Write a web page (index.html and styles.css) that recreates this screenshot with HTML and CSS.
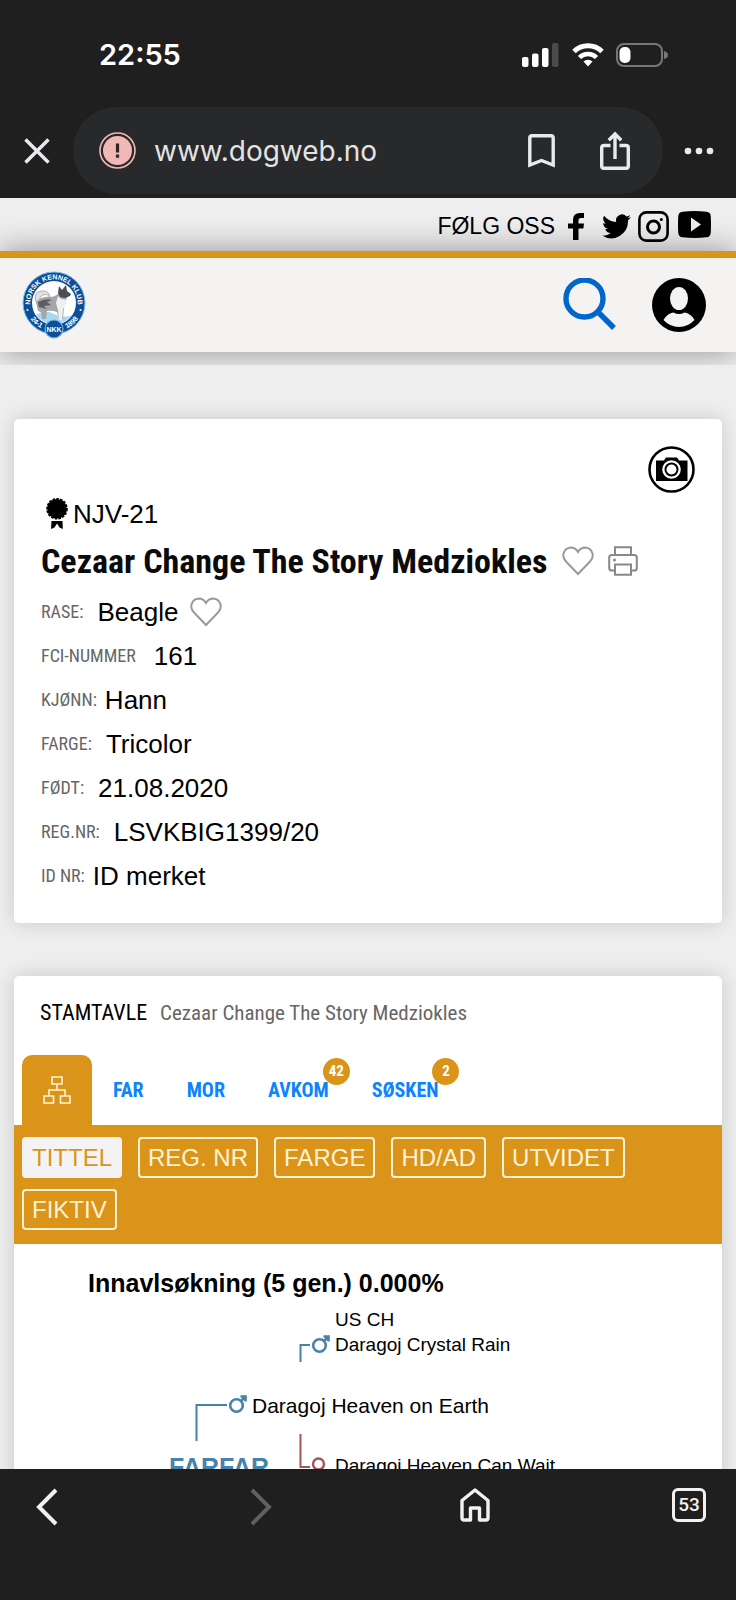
FILE: index.html
```html
<!DOCTYPE html>
<html lang="no">
<head>
<meta charset="utf-8">
<meta name="viewport" content="width=device-width, initial-scale=1">
<title>Dogweb – Cezaar Change The Story Medziokles</title>
<link rel="stylesheet" href="styles.css">
</head>
<body>
<div class="app">
  <header class="chrome">
    <div class="status">
      <span class="status-time">22:55</span>
      <div class="status-icons">
        <svg width="38" height="24" viewBox="0 0 38 24"><g fill="#fff"><rect x="0" y="14" width="6.500" height="10" rx="2"/><rect x="10" y="10.500" width="6.500" height="13.500" rx="2"/><rect x="20" y="5" width="6.500" height="19" rx="2"/></g><rect x="30" y="0" width="6.500" height="24" rx="2" fill="#4b4b4b"/></svg>
        <svg width="32" height="24" viewBox="0 0 32 24"><path d="M2 8.500a20 20 0 0 1 28 0" fill="none" stroke="#fff" stroke-width="5"/><path d="M7.500 14.500a12 12 0 0 1 17 0" fill="none" stroke="#fff" stroke-width="4.500"/><path d="M11.500 18.500a6.500 6.500 0 0 1 9 0L16 23.500z" fill="#fff"/></svg>
        <svg width="52" height="24" viewBox="0 0 52 24"><rect x="1" y="1" width="45" height="22" rx="7" fill="none" stroke="#777" stroke-width="2"/><rect x="3.500" y="4" width="11" height="16" rx="5" fill="#fff"/><path d="M48 8q4 1 4 4t-4 4z" fill="#777"/></svg>
      </div>
    </div>
    <div class="address">
      <button class="plain close" aria-label="Lukk"><svg width="26" height="26" viewBox="0 0 26 26"><path d="M1.500 1.500l23 23M24.500 1.500l-23 23" stroke="#e8eaed" stroke-width="3.500"/></svg></button>
      <div class="pill">
        <svg width="37" height="37" viewBox="0 0 37 37"><circle cx="18.500" cy="18.500" r="17.500" fill="none" stroke="#f2b8b5" stroke-width="1.600"/><circle cx="18.500" cy="18.500" r="14.500" fill="#f2b8b5"/><path d="M18.500 11.500v9M18.500 22.500v3.200" stroke="#27292b" stroke-width="3.200"/></svg>
        <span class="url">www.dogweb.no</span>
        <button class="plain" aria-label="Bokmerke"><svg width="27" height="34" viewBox="0 0 27 34"><path d="M1.800 31V4q0-2.200 2.200-2.200h19q2.200 0 2.200 2.200v27L13.500 26.500z" fill="none" stroke="#e8eaed" stroke-width="3.400"/></svg></button>
        <button class="plain share" aria-label="Del"><svg width="30" height="40" viewBox="0 0 30 40"><path d="M10.500 14.500H4q-2.300 0-2.300 2.300V35q0 2.300 2.300 2.300h22q2.300 0 2.300-2.300V16.800q0-2.300-2.300-2.300h-6.500M15 28V3M8.800 9.200L15 3l6.200 6.200" fill="none" stroke="#e8eaed" stroke-width="3.400"/></svg></button>
      </div>
      <button class="plain more" aria-label="Mer"><svg width="30" height="8" viewBox="0 0 30 8"><g fill="#e8eaed"><circle cx="4" cy="4" r="3.300"/><circle cx="15" cy="4" r="3.300"/><circle cx="26" cy="4" r="3.300"/></g></svg></button>
    </div>
  </header>

  <main class="page">
    <div class="site-top">
      <div class="follow">
        <span>FØLG OSS</span>
        <a class="fb" href="#" aria-label="Facebook"><svg width="16" height="27" viewBox="0 0 16 27"><path d="M5 27V15.500H0V10.500h5V7Q5 0 12 0h4v5h-3q-2.500 0-2.500 2.500v3H16l-.6 5h-4.900V27z"/></svg></a>
        <a class="tw" href="#" aria-label="Twitter"><svg width="29" height="25" viewBox="0 0 24 20"><path d="M24 2.400a10 10 0 0 1-2.800.8A5 5 0 0 0 23.300.5a10 10 0 0 1-3.100 1.200 4.900 4.900 0 0 0-8.400 4.500A14 14 0 0 1 1.700 1a4.900 4.900 0 0 0 1.500 6.600 5 5 0 0 1-2.200-.6 4.900 4.900 0 0 0 3.900 4.900 5 5 0 0 1-2.200.1 4.900 4.900 0 0 0 4.600 3.400A9.900 9.900 0 0 1 0 17.500 14 14 0 0 0 21.500 5z"/></svg></a>
        <a class="ig" href="#" aria-label="Instagram"><svg width="31" height="31" viewBox="0 0 31 31"><rect x="1.400" y="1.400" width="28.200" height="28.200" rx="7" fill="none" stroke="#000" stroke-width="2.600"/><circle cx="15.500" cy="16" r="6" fill="none" stroke="#000" stroke-width="3"/><circle cx="23.300" cy="8.500" r="1.500"/></svg></a>
        <a class="yt" href="#" aria-label="YouTube"><svg width="33" height="27" viewBox="0 0 33 27"><path fill-rule="evenodd" d="M4.500.7q12-1.400 24 0 4 .4 4.200 4.300.6 8.500 0 17-.3 3.900-4.200 4.300-12 1.400-24 0Q.6 25.900.3 22q-.6-8.500 0-17Q.6 1.100 4.500.7zM13 6.500v14l10-7z"/></svg></a>
      </div>
      <div class="brand-bar">
        <a class="logo" href="#" aria-label="Norsk Kennel Klub">
          <svg width="64" height="68" viewBox="0 0 64 68">
            <defs><path id="ringTop" d="M9.800 40A23.600 23.600 0 1 1 54.200 40"/><path id="ringLeft" d="M6 44Q12 55 23 59"/><path id="ringRight" d="M41 59Q53 55 58 44"/></defs>
            <circle cx="32" cy="32" r="31" fill="#0b4f96" stroke="#7db9e8" stroke-width="1"/>
            <circle cx="32" cy="32" r="22" fill="#fff"/>
            <path d="M14 44q9-6 18-1t18 1a22 22 0 0 1-36 0z" fill="#a9d8f2"/>
            <path d="M14 31q-3-10 5-11 8-1 9 6-3-4-7-2-4 2-3 7z" fill="#e0e0e0" stroke="#888" stroke-width=".6"/>
            <path d="M14 31q6-6 14-5 5 0 9-4l8 4-1 5-2 5-1 12h-4l-2-7q-5-2-10-1l-1 8h-4l-1-7-3-1z" fill="#a4a6a9"/>
            <path d="M16 31q7-4 14-2l-5 2 4 3-7 1 3 3-8-2z" fill="#5c5e61"/>
            <path d="M36 25q4 5 9 3l-2 7-2 3-1 11h-3l-1-10-2-7z" fill="#f0f0f2"/>
            <path d="M36 22l1-7 3 4 4-5 1 6 4 3-1 2-5 2-5-1z" fill="#4c4e51"/>
            <g fill="#fff" class="logo-text"><text><textPath href="#ringTop" startOffset="50%" text-anchor="middle">NORSK KENNEL KLUB</textPath></text><text><textPath href="#ringLeft" startOffset="50%" text-anchor="middle">24-1</textPath></text><text><textPath href="#ringRight" startOffset="50%" text-anchor="middle">1898</textPath></text></g>
            <circle cx="5.500" cy="39" r="1" fill="#fff"/><circle cx="58.500" cy="39" r="1" fill="#fff"/>
            <circle cx="32" cy="58" r="9" fill="#0b4f96" stroke="#6fb4e6" stroke-width="1.200"/>
            <text x="32" y="60.500" text-anchor="middle" fill="#fff" class="logo-text">NKK</text>
          </svg>
        </a>
        <button class="plain search" aria-label="Søk"><svg width="54" height="54" viewBox="0 0 54 54"><circle cx="21.500" cy="20.500" r="18.500" fill="none" stroke="#0066cc" stroke-width="5.400"/><path d="M34.500 33.500l16.500 16.500" stroke="#0066cc" stroke-width="5.400"/></svg></button>
        <button class="plain user" aria-label="Min side"><svg width="54" height="54" viewBox="0 0 54 54"><circle cx="27" cy="27" r="27"/><ellipse cx="27" cy="20.500" rx="9" ry="11.500" fill="#f4f3f2"/><path d="M11.500 42q4-7 10-7.500 5.500 3 11 0 6 .5 10 7.500-6.500 7-15.500 7T11.500 42z" fill="#f4f3f2"/></svg></button>
      </div>
    </div>

    <section class="card profile">
      <div class="photo-row"><button class="plain" aria-label="Bilder"><svg width="47" height="47" viewBox="0 0 47 47"><circle cx="23.500" cy="23.500" r="22" fill="none" stroke="#000" stroke-width="2.600"/><path d="M8 14.500h8l2-3h11l2 3h8.500V35H8z"/><circle cx="23.500" cy="23.500" r="9.300" fill="#fff"/><circle cx="23.500" cy="23.500" r="7"/><circle cx="23.500" cy="23.500" r="5" fill="#fff"/></svg></button></div>
      <p class="award"><svg width="22" height="32" viewBox="0 0 22 32"><circle cx="11" cy="10.800" r="9.800"/><circle cx="11" cy="10.800" r="10" fill="none" stroke="#000" stroke-width="1.600" stroke-dasharray="2.600 1.250"/><path d="M5.500 23h11l.3 8-3.300-1.500L11 25.500l-2.500 4L5 31z"/></svg>NJV-21</p>
      <div class="name-row">
        <h1>Cezaar Change The Story Medziokles</h1>
        <button class="plain" aria-label="Favoritt"><svg width="32" height="30" viewBox="0 0 32 30"><path d="M16 28L4 15.500Q.5 12 1.500 7.500 3 2 8.500 1.500 13.500 1.500 16 6q2.500-4.500 7.500-4.500Q29 2 30.500 7.500q1 4.500-2.500 8z" fill="none" stroke="#999" stroke-width="2"/></svg></button>
        <button class="plain" aria-label="Skriv ut"><svg width="30" height="30" viewBox="0 0 30 30"><path d="M7 9V1.200h16V9M7 24.500H3.800q-2.600 0-2.600-2.600V11.600Q1.200 9 3.800 9h22.400q2.600 0 2.600 2.600v10.300q0 2.600-2.600 2.600H23M7 18.500h16v10.300H7z" fill="none" stroke="#888" stroke-width="2"/><circle cx="6.500" cy="14" r="1.500" fill="#888"/></svg></button>
      </div>
      <dl class="facts">
        <div class="fact"><dt>RASE:</dt><dd>Beagle</dd><dd><button class="plain" aria-label="Favorittrase"><svg width="32" height="30" viewBox="0 0 32 30"><path d="M16 28L4 15.500Q.5 12 1.500 7.500 3 2 8.500 1.500 13.500 1.500 16 6q2.500-4.500 7.500-4.500Q29 2 30.500 7.500q1 4.500-2.500 8z" fill="none" stroke="#999" stroke-width="2"/></svg></button></dd></div>
        <div class="fact wide"><dt>FCI-NUMMER</dt><dd>161</dd></div>
        <div class="fact tight"><dt>KJØNN:</dt><dd>Hann</dd></div>
        <div class="fact"><dt>FARGE:</dt><dd>Tricolor</dd></div>
        <div class="fact"><dt>FØDT:</dt><dd>21.08.2020</dd></div>
        <div class="fact"><dt>REG.NR:</dt><dd>LSVKBIG1399/20</dd></div>
        <div class="fact tight"><dt>ID NR:</dt><dd>ID merket</dd></div>
      </dl>
    </section>

    <section class="card pedigree">
      <div class="pedigree-head"><h2>STAMTAVLE</h2><span>Cezaar Change The Story Medziokles</span></div>
      <nav class="tabs">
        <a class="tab-active" href="#" aria-label="Stamtavle"><svg width="28" height="28" viewBox="0 0 28 28"><path d="M9 1h10v7H9zM1 20h9.500v7H1zM17.500 20H27v7h-9.500zM14 8v6M6 20v-6h16v6" fill="none" stroke="#fff3d6" stroke-width="1.600"/></svg></a>
        <a class="tab" href="#">FAR</a>
        <a class="tab" href="#">MOR</a>
        <a class="tab" href="#">AVKOM<span class="badge">42</span></a>
        <a class="tab" href="#">SØSKEN<span class="badge">2</span></a>
      </nav>
      <div class="filters">
        <button class="filter on">TITTEL</button><button class="filter">REG. NR</button><button class="filter">FARGE</button><button class="filter">HD/AD</button><button class="filter">UTVIDET</button><button class="filter">FIKTIV</button>
      </div>
      <h3>Innavlsøkning (5 gen.) 0.000%</h3>
      <div class="tree">
        <svg class="lines" width="400" height="190" viewBox="0 0 400 190" fill="none" stroke-width="2">
          <g stroke="#4682a9"><path d="M286.500 55V38H296M182.500 134V98H213"/><g stroke-width="2.600"><circle cx="305.500" cy="38.500" r="6.300"/><path d="M310 34l5-5M309.500 29.500h5v5"/><circle cx="222.500" cy="98.500" r="6.300"/><path d="M227 94l5-5M226.500 89.500h5v5"/></g></g>
          <g stroke="#a5525a"><path d="M286.500 127v33H296"/><circle cx="304.500" cy="157" r="5.500" stroke-width="2.400"/><path d="M304.500 163v10M300 169h9"/></g>
        </svg>
        <span class="node gen4 n1">US CH<br>Daragoj Crystal Rain</span>
        <span class="node gen3 n2">Daragoj Heaven on Earth</span>
        <span class="node gen2 n3">FARFAR</span>
        <span class="node gen4 n4">Daragoj Heaven Can Wait</span>
      </div>
    </section>
  </main>

  <footer class="toolbar">
    <button class="plain" aria-label="Tilbake"><svg width="22" height="38" viewBox="0 0 22 38"><path d="M20 2L3 19l17 17" fill="none" stroke="#f1f1f1" stroke-width="4"/></svg></button>
    <button class="plain" aria-label="Frem"><svg width="22" height="38" viewBox="0 0 22 38"><path d="M2 2l17 17L2 36" fill="none" stroke="#5f6064" stroke-width="4"/></svg></button>
    <button class="plain" aria-label="Hjem"><svg width="30" height="34" viewBox="0 0 30 34"><path d="M2 12.500L15 2l13 10.500V30q0 2-2 2h-6.500V20h-9v12H4q-2 0-2-2z" fill="none" stroke="#f1f1f1" stroke-width="3.400" stroke-linejoin="round"/></svg></button>
    <button class="tab-count" aria-label="Faner">53</button>
  </footer>
</div>
</body>
</html>
```
FILE: styles.css
```css
* { box-sizing: border-box; }
body { margin: 0; background: #1f1f1f; color: #000; font-family: "Liberation Sans", Arial, sans-serif; }
svg { display: block; flex: none; }
h1, h2, h3, p, dl, dd { margin: 0; font-weight: normal; }
a { color: inherit; text-decoration: none; }
.plain { display: block; padding: 0; border: 0; background: none; cursor: pointer; }

.app { display: flex; flex-direction: column; height: 100vh; }

.chrome { flex: none; padding-bottom: 4px; background: #1f1f1f; color: #fff; }
.status { display: flex; align-items: center; justify-content: space-between; height: 107px; padding: 2px 68px 0 99px; }
.status-time { font: 600 29px/36px Inter, sans-serif; }
.status-icons { display: flex; gap: 12px; }
.address { display: flex; align-items: center; padding: 0 22px 0 24px; }
.pill { display: flex; flex: 1; align-items: center; height: 87px; margin: 0 21px 0 23px; padding: 0 33px 0 26px; border-radius: 44px; background: #28292b; }
.url { flex: 1; margin-left: 18px; color: #e3e3e3; font: 28px/36px Inter, sans-serif; }
.share { margin-left: 45px; }

.page { flex: 1; min-height: 0; overflow: hidden; background: #eee; }
.site-top { padding-bottom: 13px; overflow: hidden; }
.follow { display: flex; align-items: center; justify-content: flex-end; height: 53px; padding: 3px 25px 0 0; font-size: 23px; }
.follow a { position: relative; z-index: 1; }
.follow span { position: relative; z-index: 1; }
.fb { margin-left: 13px; }
.tw { margin-left: 18px; }
.ig { margin-left: 7px; }
.yt { margin: 0 0 4px 9px; }
.brand-bar { display: flex; align-items: center; height: 101px; padding: 0 30px 0 22px; border-top: 7px solid #db941a; background: #f4f3f2; box-shadow: 0 0 30px rgba(0, 0, 0, .4); }
.logo { flex: 1; }
.logo-text { font: bold 7px "Liberation Sans", Arial, sans-serif; }
.search { margin-right: 35px; }

.card { margin: 0 14px; border-radius: 5px; background: #fff; box-shadow: 0 0 20px rgba(0, 0, 0, .16); }
.profile { margin-top: 54px; padding: 27px 27px 25px; }
.photo-row { display: flex; justify-content: flex-end; }
.award { display: flex; align-items: center; gap: 5px; margin: 5px 0 0 5px; font-size: 26px; line-height: 32px; }
.name-row { display: flex; align-items: center; gap: 14px; margin: 7px 0 5px; }
.name-row h1 { color: #0b0b0b; font: bold 34px/48px "Roboto Condensed", "Liberation Sans Narrow", "Liberation Sans", sans-serif; }
.fact { display: flex; align-items: center; gap: 14px; height: 44px; font-size: 26px; }
.fact dd + dd { margin-left: -2px; }
.fact.wide { gap: 18px; }
.fact.tight { gap: 8px; }
.fact dt { color: #666; font: 18px/30px "Roboto Condensed", "Liberation Sans Narrow", "Liberation Sans", sans-serif; }

.pedigree { margin-top: 53px; }
.pedigree-head { display: flex; align-items: baseline; gap: 13px; padding: 18px 26px 23px; font: 22px/38px "Roboto Condensed", "Liberation Sans Narrow", "Liberation Sans", sans-serif; }
.pedigree-head h2 { font: inherit; }
.pedigree-head span { color: #666; font-size: 21px; }
.tabs { display: flex; align-items: center; height: 70px; padding-left: 8px; color: #0a84ff; font: bold 20px/30px "Roboto Condensed", "Liberation Sans Narrow", "Liberation Sans", sans-serif; }
.tab-active { display: grid; place-items: center; width: 70px; height: 70px; border-radius: 10px 10px 0 0; background: #db941a; }
.tab { position: relative; margin-left: 21px; padding-right: 22px; }
.badge { position: absolute; top: -17px; right: 1px; width: 27px; height: 27px; border-radius: 50%; background: #db941a; color: #fff; font-size: 15px; line-height: 27px; text-align: center; }
.filters { display: flex; flex-wrap: wrap; gap: 11px 16px; padding: 12px 8px 14px; background: #db941a; }
.filter { height: 41px; padding: 0 8px; border: 2px solid #fff3d6; border-radius: 4px; background: none; color: #fff3d6; font: 24px/36px "Liberation Sans", Arial, sans-serif; }
.filter.on { border-color: #f3f3f3; background: #f3f3f3; color: #db941a; }
.pedigree h3 { padding: 23px 0 0 74px; font-size: 25px; font-weight: bold; line-height: 32px; }
.tree { position: relative; height: 400px; margin-top: 8px; }
.lines { position: absolute; left: 0; top: 0; }
.node { position: absolute; white-space: nowrap; }
.gen4 { font-size: 19px; line-height: 25px; }
.gen3 { font-size: 21px; line-height: 26px; }
.gen2 { color: #4682a9; font-size: 25px; font-weight: bold; line-height: 28px; }
.n1 { left: 321px; top: 0; }
.n2 { left: 238px; top: 86px; }
.n3 { left: 155px; top: 146px; }
.n4 { left: 321px; top: 146px; }

.toolbar { display: flex; flex: none; align-items: flex-start; justify-content: space-between; height: 131px; padding: 19px 30px 0; background: #1f1f1f; }
.toolbar .plain { display: flex; justify-content: center; width: 34px; }
.tab-count { width: 34px; height: 34px; padding: 0; border: 3px solid #f1f1f1; border-radius: 6px; background: none; color: #f1f1f1; font: 500 19px/28px Roboto, sans-serif; }
```
